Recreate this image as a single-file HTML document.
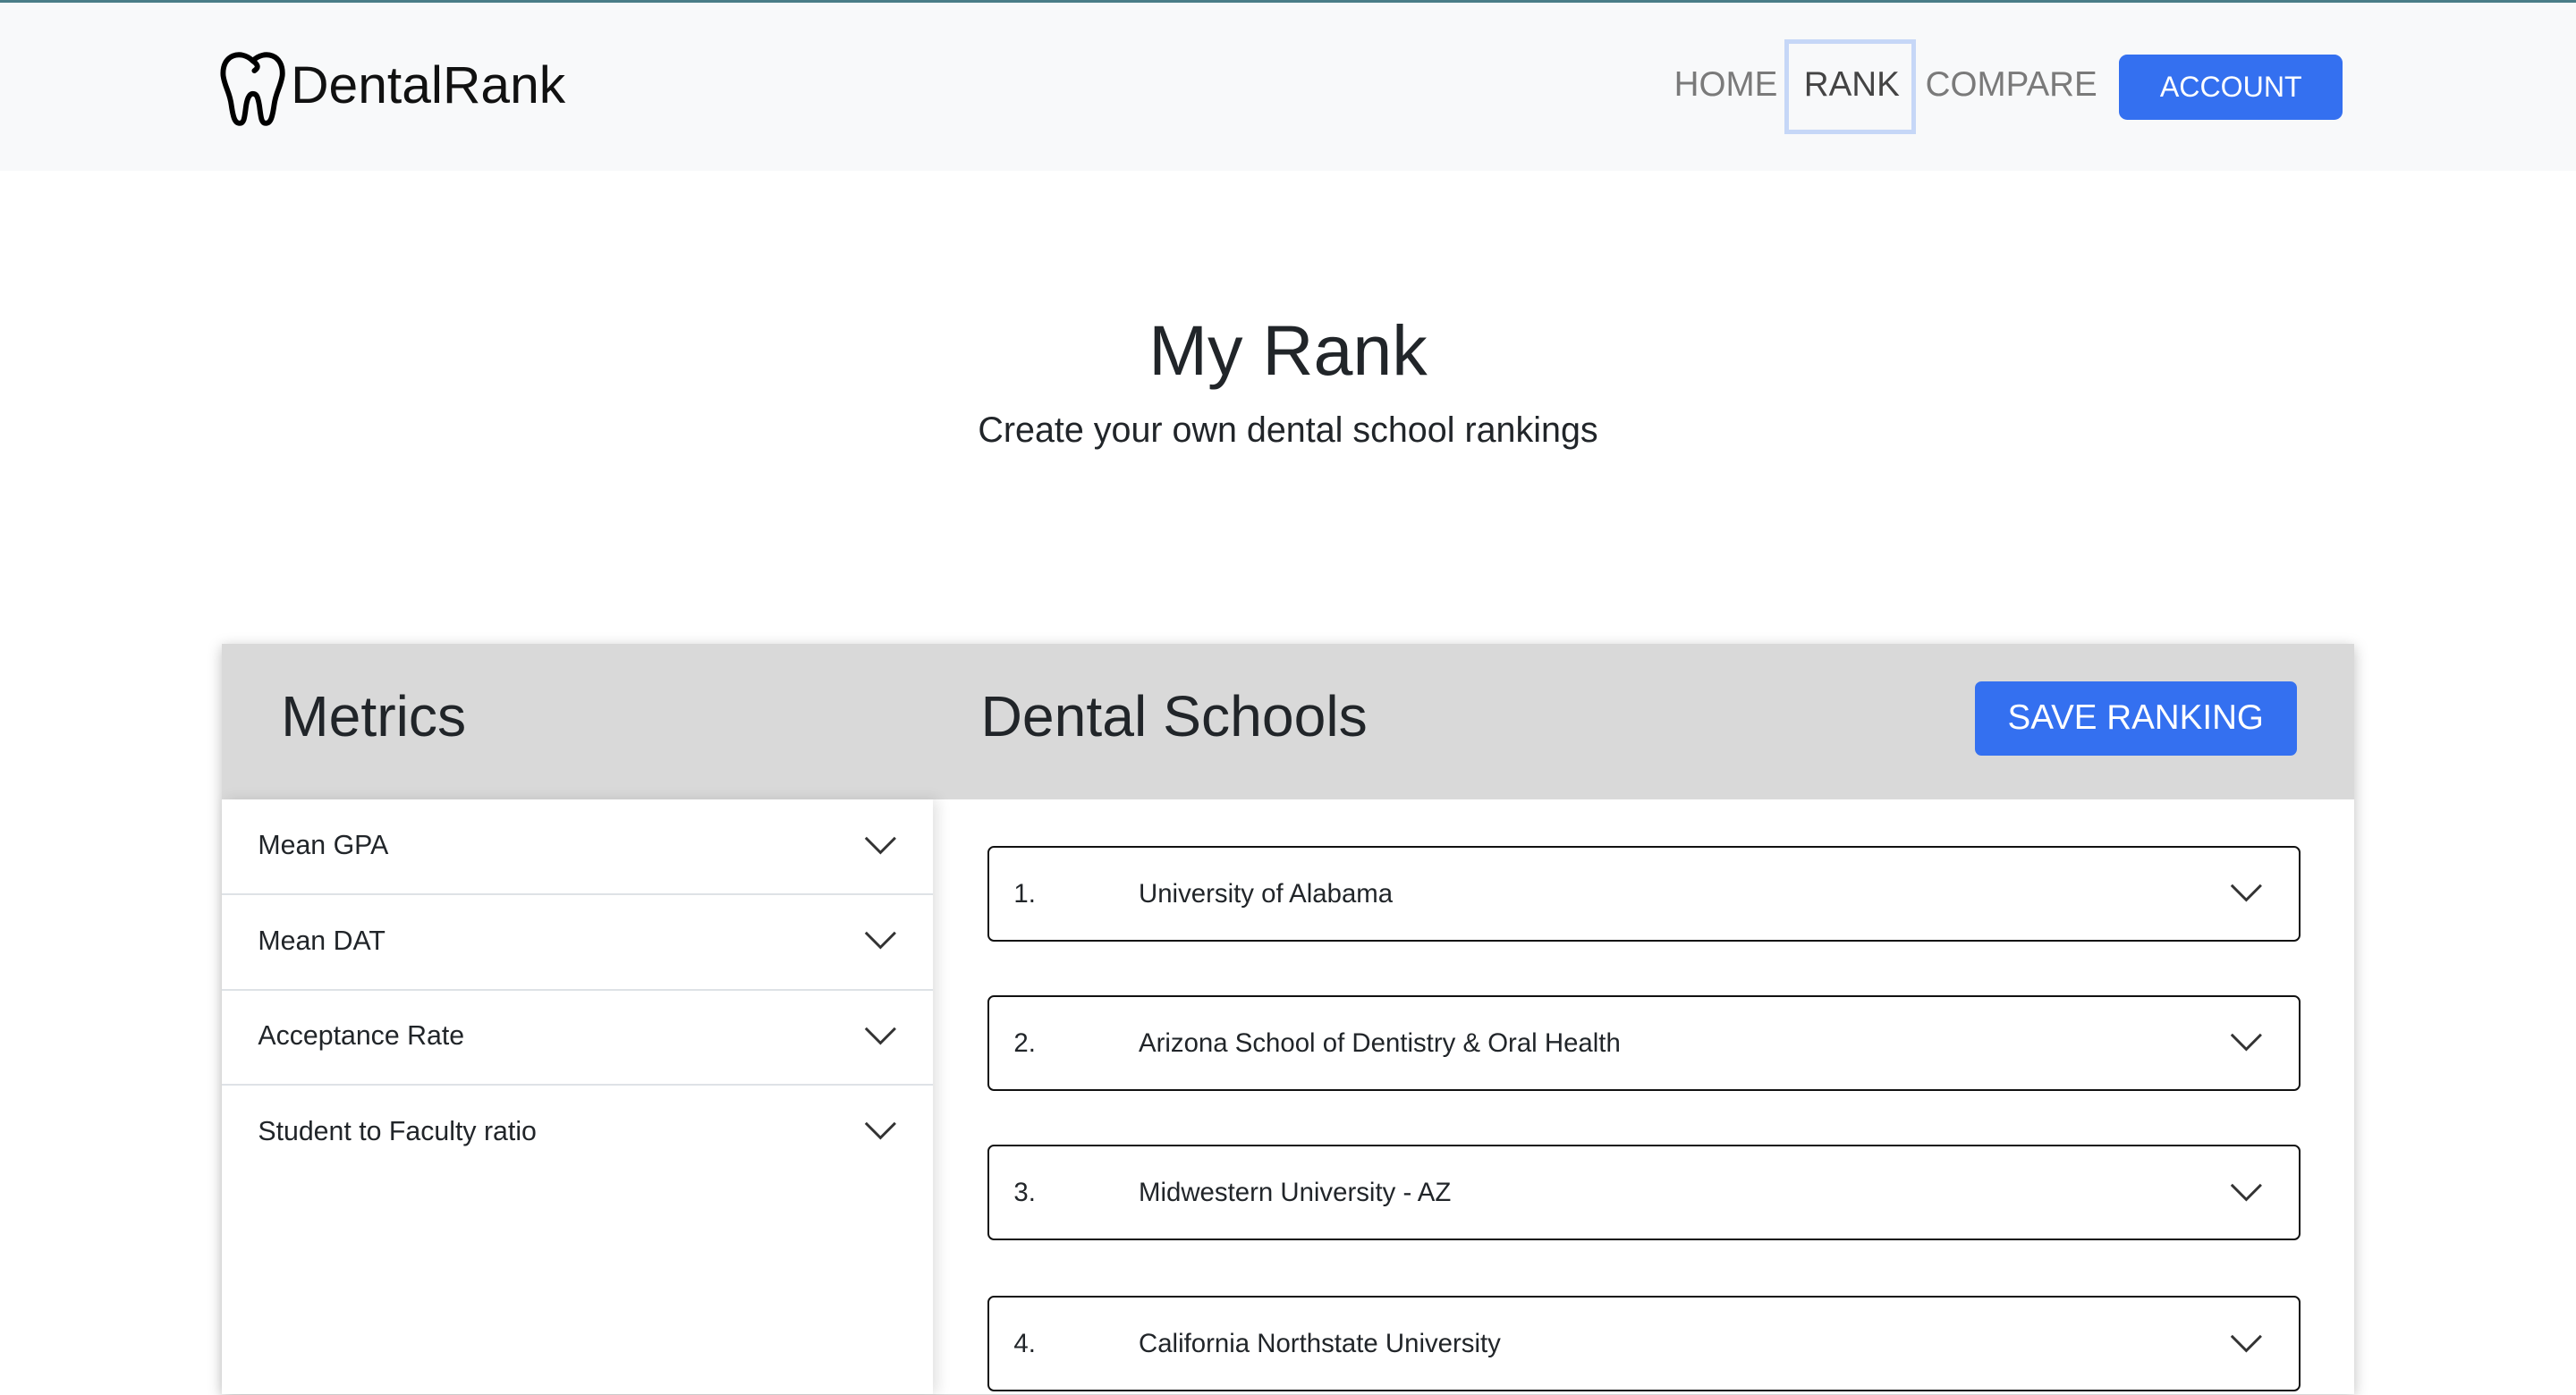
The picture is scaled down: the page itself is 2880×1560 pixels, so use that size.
<!DOCTYPE html>
<html><head><meta charset="utf-8"><style>
html{margin:0;padding:0;height:1560px;overflow:hidden;}
body{margin:0;padding:0;width:1568px;height:849.3px;overflow:hidden;zoom:1.83673;background:#fff;font-family:"Liberation Sans",Arial,sans-serif;color:#212529;position:relative;}
.a{position:absolute;}
.hdr{left:0;top:0;width:1568px;height:104px;background:#f8f9fa;border-top:2px solid #4a7d87;box-sizing:border-box;}
.nav{font-size:21px;color:#7a7a7a;top:40px;}
.card{left:135px;top:392px;width:1298px;height:457px;box-shadow:0 2px 8px rgba(0,0,0,.25);background:#fff;}
.ch{top:0;left:0;width:1298px;height:95px;background:#d9d9d9;}
.left{left:0;top:95px;width:433px;height:362px;background:#fff;box-shadow:3px 0 8px rgba(0,0,0,.12);}
.row{position:absolute;left:0;width:433px;height:57px;border-bottom:1.2px solid #dee2e6;font-size:16.5px;}
.row span{position:absolute;left:22px;top:19px;}
.row svg,.it svg{position:absolute;}
.it{position:absolute;left:466px;width:797px;height:56px;border:1.2px solid #111;border-radius:4px;font-size:16px;}
.it .n{position:absolute;left:15px;top:19px;}
.it .t{position:absolute;left:91px;top:19px;}
</style></head><body>
<div class="a hdr"></div>
<svg class="a" style="left:133px;top:31px" width="44" height="46" viewBox="0 0 44 46"><path d="M21 6 C14 -1 2 2 3 15 C4 22 7 25 8 33 C9 40 10 44 13 44 C16 44 16 40 17 33 C18 27 20 26 21 26 C23 26 24 27 25 33 C26 40 26 44 29 44 C32 44 33 40 34 33 C35 25 38 22 39 15 C40 2 28 -1 21 6 Z M21 6 C24 8 25 10 22 12" fill="none" stroke="#000" stroke-width="3.2" stroke-linejoin="round" stroke-linecap="round"/></svg>
<div class="a" style="left:177px;top:34px;font-size:32px;color:#111;">DentalRank</div>
<div class="a nav" style="left:1019px;">HOME</div>
<div class="a" style="left:1086px;top:24px;width:75px;height:52px;border:3px solid #c6d7f7;"></div>
<div class="a nav" style="left:1098px;color:#444;">RANK</div>
<div class="a nav" style="left:1172px;">COMPARE</div>
<div class="a" style="left:1290px;top:33px;width:136px;height:40px;background:#3470f0;border-radius:5px;color:#fff;font-size:17.5px;text-align:center;line-height:40px;">ACCOUNT</div>
<div class="a" style="left:0;width:1568px;top:189px;text-align:center;font-size:43px;">My Rank</div>
<div class="a" style="left:0;width:1568px;top:250px;text-align:center;font-size:21.5px;">Create your own dental school rankings</div>
<div class="a card">
<div class="a ch"></div>
<div class="a" style="left:36px;top:24px;font-size:35px;">Metrics</div>
<div class="a" style="left:462px;top:24px;font-size:35px;">Dental Schools</div>
<div class="a" style="left:1067px;top:23px;width:196px;height:45px;background:#3470f0;border-radius:4px;color:#fff;font-size:21px;text-align:center;line-height:45px;">SAVE RANKING</div>
<div class="a left">
<div class="row" style="top:0"><span>Mean GPA</span><svg style="left:391px;top:22px" width="20" height="12"><path d="M1 1 L10 10 L19 1" fill="none" stroke="#333" stroke-width="1.6"/></svg></div>
<div class="row" style="top:58px"><span>Mean DAT</span><svg style="left:391px;top:22px" width="20" height="12"><path d="M1 1 L10 10 L19 1" fill="none" stroke="#333" stroke-width="1.6"/></svg></div>
<div class="row" style="top:116px"><span>Acceptance Rate</span><svg style="left:391px;top:22px" width="20" height="12"><path d="M1 1 L10 10 L19 1" fill="none" stroke="#333" stroke-width="1.6"/></svg></div>
<div class="row" style="top:174px;border:none"><span>Student to Faculty ratio</span><svg style="left:391px;top:22px" width="20" height="12"><path d="M1 1 L10 10 L19 1" fill="none" stroke="#333" stroke-width="1.6"/></svg></div>
</div>
<div class="it" style="top:123px"><span class="n">1.</span><span class="t">University of Alabama</span><svg style="left:755px;top:22px" width="20" height="12"><path d="M1 1 L10 10 L19 1" fill="none" stroke="#333" stroke-width="1.6"/></svg></div>
<div class="it" style="top:214px"><span class="n">2.</span><span class="t">Arizona School of Dentistry &amp; Oral Health</span><svg style="left:755px;top:22px" width="20" height="12"><path d="M1 1 L10 10 L19 1" fill="none" stroke="#333" stroke-width="1.6"/></svg></div>
<div class="it" style="top:305px"><span class="n">3.</span><span class="t">Midwestern University - AZ</span><svg style="left:755px;top:22px" width="20" height="12"><path d="M1 1 L10 10 L19 1" fill="none" stroke="#333" stroke-width="1.6"/></svg></div>
<div class="it" style="top:397px"><span class="n">4.</span><span class="t">California Northstate University</span><svg style="left:755px;top:22px" width="20" height="12"><path d="M1 1 L10 10 L19 1" fill="none" stroke="#333" stroke-width="1.6"/></svg></div>
</div>
</body></html>
